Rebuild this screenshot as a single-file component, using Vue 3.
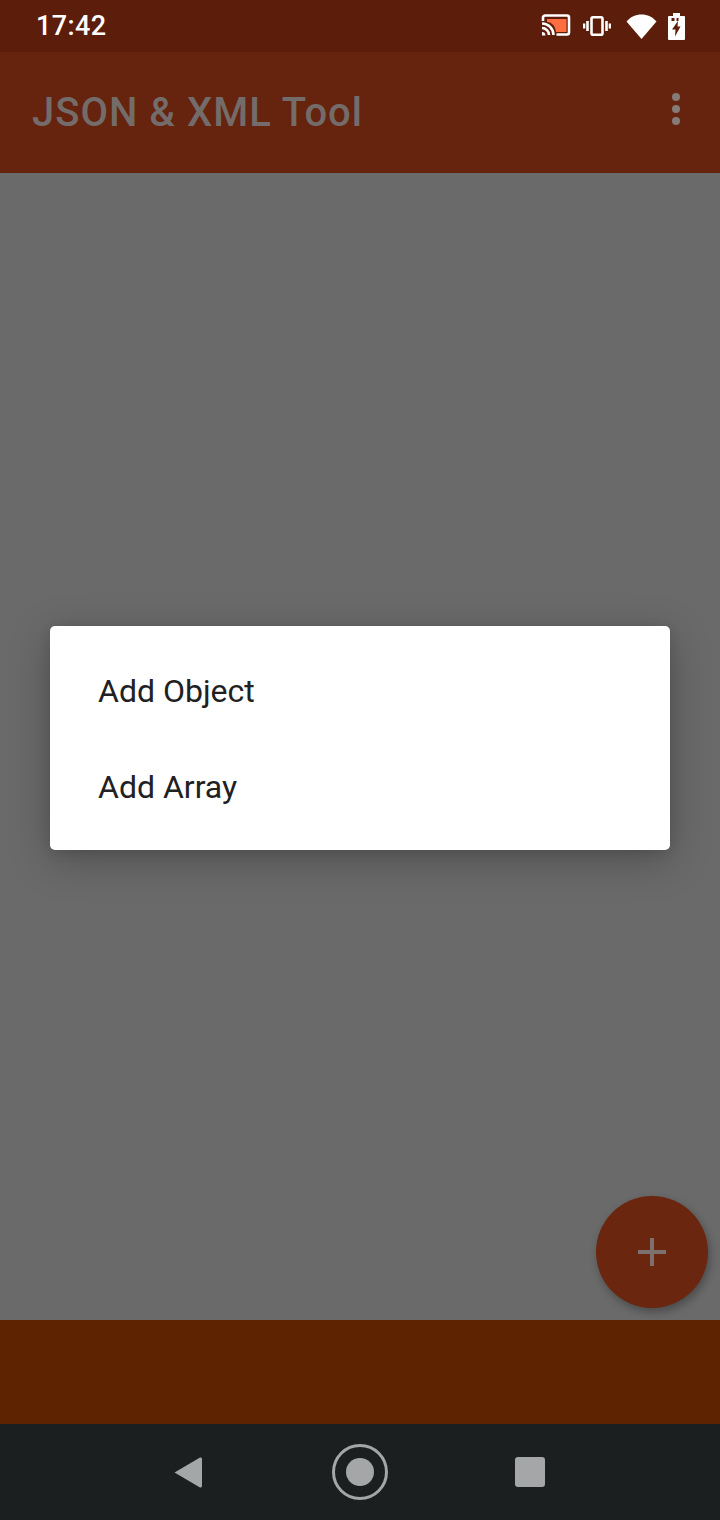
<script setup>
const menuItems = ['Add Object', 'Add Array']
</script>

<template>
  <div class="phone">
    <div class="status-bar">
      <span class="clock">17:42</span>
      <div class="status-icons">
        <svg class="icon-cast" width="30" height="24" viewBox="0 0 30 24">
          <path d="M6 5h19.500v13H15C14 11.500 11 8.500 6 8z" fill="#ff6e40" />
          <path d="M2 7V3.500A2 2 0 0 1 4 1.500h22a2 2 0 0 1 2 2v15a2 2 0 0 1-2 2H15.500" fill="none" stroke="#fff" stroke-width="2.600" />
          <path d="M1 9.500a11.500 11.500 0 0 1 11.500 11.500" fill="none" stroke="#fff" stroke-width="2.600" />
          <path d="M1 14a7 7 0 0 1 7 7" fill="none" stroke="#fff" stroke-width="2.600" />
          <path d="M1 18a3.400 3.400 0 0 1 3.400 3.400H1z" fill="#fff" />
        </svg>
        <svg class="icon-vibrate" width="28" height="20" viewBox="0 0 28 20">
          <rect x="8.500" y="1.300" width="11" height="17.400" rx="1.500" fill="none" stroke="#fff" stroke-width="2.600" />
          <path d="M4.500 5v10M23.500 5v10" stroke="#fff" stroke-width="2.600" />
          <path d="M1 7.500v5M27 7.500v5" stroke="#fff" stroke-width="2.600" />
        </svg>
        <svg class="icon-wifi" width="31" height="25" viewBox="0 0 31 25">
          <path d="M15.500 25 0.500 7.500C4.500 3 9.500 0.500 15.500 0.500S26.500 3 30.500 7.500z" fill="#fff" />
        </svg>
        <svg class="icon-battery" width="17" height="27" viewBox="0 0 17 27">
          <path d="M5 0h7v3h4a1 1 0 0 1 1 1v22a1 1 0 0 1-1 1H1a1 1 0 0 1-1-1V4a1 1 0 0 1 1-1h4z" fill="#fff" />
          <path d="M3.500 5h3v3h-3zM8.500 5h2v3h-2z" fill="#5c1d0a" />
          <path d="M10 8 4 16.500h3.500L7 23.500 12.500 13.500H9.500z" fill="#5c1d0a" />
        </svg>
      </div>
    </div>

    <header class="app-bar">
      <h1 class="title">JSON &amp; XML Tool</h1>
      <div class="more">
        <span class="dot"></span>
        <span class="dot"></span>
        <span class="dot"></span>
      </div>
    </header>

    <main class="content">
      <button class="fab">
        <svg width="28" height="28" viewBox="0 0 28 28">
          <path d="M0 14h28M14 0v28" stroke="#7d7170" stroke-width="4" />
        </svg>
      </button>
    </main>

    <div class="banner"></div>

    <nav class="nav-bar">
      <svg width="30" height="33" viewBox="0 0 30 33">
        <path d="M1.500 16.500 27 1.500a1.500 1.500 0 0 1 2 1.500v27a1.500 1.500 0 0 1-2 1.500z" fill="#a4a6a7" />
      </svg>
      <div class="home"><span class="home-dot"></span></div>
      <span class="recents"></span>
    </nav>

    <div class="dialog">
      <div v-for="item in menuItems" :key="item" class="dialog-item">{{ item }}</div>
    </div>
  </div>
</template>

<style>
html, body {
  margin: 0;
  padding: 0;
}
</style>

<style scoped>
.phone {
  position: relative;
  width: 720px;
  height: 1520px;
  display: flex;
  flex-direction: column;
  font-family: Roboto, "Liberation Sans", sans-serif;
  overflow: hidden;
}

.status-bar {
  height: 52px;
  flex-shrink: 0;
  background-color: #5c1d0a;
  display: flex;
  align-items: center;
  justify-content: space-between;
  padding: 0 35px 0 36px;
  box-sizing: border-box;
}

.clock {
  color: #ffffff;
  font-size: 27px;
  font-weight: 500;
  letter-spacing: 0.4px;
}

.status-icons {
  display: flex;
  align-items: center;
}

.icon-vibrate {
  margin-left: 12px;
}

.icon-wifi {
  margin-left: 15px;
}

.icon-battery {
  margin-left: 11px;
}

.app-bar {
  height: 121px;
  flex-shrink: 0;
  background-color: #66230e;
  display: flex;
  align-items: center;
  justify-content: space-between;
  padding: 0 40px 0 32px;
  box-sizing: border-box;
}

.title {
  margin: 0 0 1px;
  color: #736c6a;
  font-size: 40px;
  font-weight: 500;
  letter-spacing: 1px;
}

.more {
  display: flex;
  flex-direction: column;
  gap: 4px;
  margin-bottom: 7px;
}

.dot {
  width: 8px;
  height: 8px;
  border-radius: 50%;
  background-color: #857b79;
}

.content {
  flex: 1;
  position: relative;
  background-color: #6a6a6a;
}

.fab {
  position: absolute;
  right: 12px;
  bottom: 12px;
  width: 112px;
  height: 112px;
  padding: 0;
  border: none;
  border-radius: 50%;
  background-color: #6a260e;
  box-shadow: 2px 4px 8px rgba(0, 0, 0, 0.3);
  display: flex;
  align-items: center;
  justify-content: center;
}

.banner {
  height: 104px;
  flex-shrink: 0;
  background-color: #5e2300;
}

.nav-bar {
  height: 96px;
  flex-shrink: 0;
  background-color: #1b1f20;
  display: flex;
  align-items: center;
  box-sizing: border-box;
  padding: 0 175px 0 173px;
  justify-content: space-between;
}

.home {
  width: 56px;
  height: 56px;
  margin-left: 2px;
  box-sizing: border-box;
  border: 3px solid #a4a6a7;
  border-radius: 50%;
  display: flex;
  align-items: center;
  justify-content: center;
}

.home-dot {
  width: 28px;
  height: 28px;
  border-radius: 50%;
  background-color: #a4a6a7;
}

.recents {
  width: 30px;
  height: 30px;
  border-radius: 3px;
  background-color: #a4a6a7;
}

.dialog {
  position: absolute;
  left: 50px;
  top: 626px;
  width: 620px;
  padding: 17px 0 15px;
  box-sizing: border-box;
  background-color: #ffffff;
  border-radius: 5px;
  box-shadow: 0 10px 40px rgba(0, 0, 0, 0.26), 0 2px 12px rgba(0, 0, 0, 0.1);
}

.dialog-item {
  height: 96px;
  display: flex;
  align-items: center;
  padding-left: 48px;
  color: #212121;
  font-size: 32px;
}
</style>
